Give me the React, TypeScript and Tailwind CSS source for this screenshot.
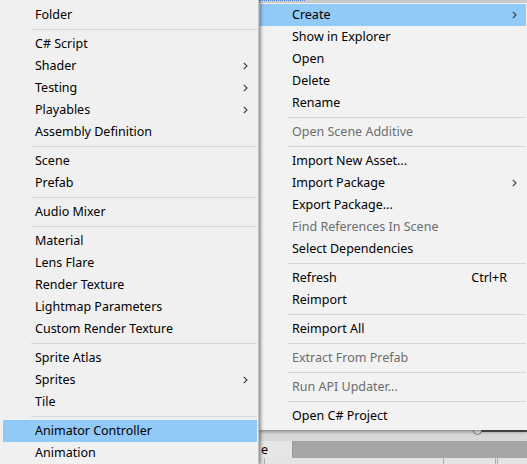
import React from 'react';

type Entry =
  | 'sep'
  | { label: string; sub?: boolean; disabled?: boolean; active?: boolean; shortcut?: string };

const createMenu: Entry[] = [
  { label: 'Folder' },
  'sep',
  { label: 'C# Script' },
  { label: 'Shader', sub: true },
  { label: 'Testing', sub: true },
  { label: 'Playables', sub: true },
  { label: 'Assembly Definition' },
  'sep',
  { label: 'Scene' },
  { label: 'Prefab' },
  'sep',
  { label: 'Audio Mixer' },
  'sep',
  { label: 'Material' },
  { label: 'Lens Flare' },
  { label: 'Render Texture' },
  { label: 'Lightmap Parameters' },
  { label: 'Custom Render Texture' },
  'sep',
  { label: 'Sprite Atlas' },
  { label: 'Sprites', sub: true },
  { label: 'Tile' },
  'sep',
  { label: 'Animator Controller', active: true },
  { label: 'Animation' },
];

const assetMenu: Entry[] = [
  { label: 'Create', sub: true, active: true },
  { label: 'Show in Explorer' },
  { label: 'Open' },
  { label: 'Delete' },
  { label: 'Rename' },
  'sep',
  { label: 'Open Scene Additive', disabled: true },
  'sep',
  { label: 'Import New Asset...' },
  { label: 'Import Package', sub: true },
  { label: 'Export Package...' },
  { label: 'Find References In Scene', disabled: true },
  { label: 'Select Dependencies' },
  'sep',
  { label: 'Refresh', shortcut: 'Ctrl+R' },
  { label: 'Reimport' },
  'sep',
  { label: 'Reimport All' },
  'sep',
  { label: 'Extract From Prefab', disabled: true },
  'sep',
  { label: 'Run API Updater...', disabled: true },
  'sep',
  { label: 'Open C# Project' },
];

function Chevron() {
  return (
    <svg width="5" height="8" viewBox="0 0 5 8" className="shrink-0">
      <path d="M0.8 0.8 L4 4 L0.8 7.2" fill="none" stroke="#3a3a3a" strokeWidth="1.1" />
    </svg>
  );
}

function MenuList({ entries }: { entries: Entry[] }) {
  return (
    <>
      {entries.map((e, i) => {
        if (e === 'sep') {
          return (
            <div key={i} className="py-[3px] pl-[28px]">
              <div className="h-px bg-[#d7d7d7]" />
            </div>
          );
        }
        return (
          <div
            key={i}
            className={`h-[22px] flex items-center pl-[32px] ${e.active ? 'bg-[#91c9f7]' : ''} ${
              e.disabled ? 'text-[#6d6d6d]' : 'text-black'
            }`}
          >
            <span className="flex-1 whitespace-nowrap">{e.label}</span>
            {e.shortcut && <span className="pr-[19px]">{e.shortcut}</span>}
            {e.sub && (
              <span className="pr-[9px]">
                <Chevron />
              </span>
            )}
          </div>
        );
      })}
    </>
  );
}

export default function App() {
  return (
    <div className="w-[527px] h-[464px] overflow-hidden flex bg-[#f0f0f0] text-[12.5px] leading-none font-['Noto_Sans',sans-serif]">
      {/* Create submenu */}
      <div className="relative z-20 w-[259px] shrink-0 h-full bg-[#f0f0f0] pt-[4px] pl-[3px] pr-px border-r border-[#c4c4c4] shadow-[2px_0_3px_rgba(0,0,0,0.4)]">
        <MenuList entries={createMenu} />
      </div>

      {/* Parent asset menu + editor behind */}
      <div className="flex-1 flex flex-col">
        <div className="h-[3px] bg-[#cbcbcb] flex">
          <div className="w-[46px] h-px border-t border-dotted border-[#4a86e8]" />
        </div>
        <div className="relative z-10 bg-[#f2f2f2] pt-px pb-[3px] pl-px pr-px shadow-[0_2px_3px_rgba(0,0,0,0.35)]">
          <MenuList entries={assetMenu} />
        </div>
        <div className="flex-1 flex flex-col">
          <div className="relative h-[11px] bg-[#d8d8d8]">
            <div className="absolute left-[222px] right-0 top-0 h-[2px] bg-[#555]" />
            <div className="absolute left-[214px] top-[-4px] w-[9px] h-[9px] rounded-full border border-[#777] bg-[#e6e6e6]" />
          </div>
          <div className="h-[17px] bg-[#a6a6a6] flex">
            <div className="w-[34px] h-[19px] bg-[#e6e6e6] border-r border-[#999] text-black pl-[2px] pt-[3px]">e</div>
          </div>
          <div className="flex-1 bg-[#e4e4e4] flex">
            <div className="w-[6px] border-r border-[#b0b0b0]" />
            <div className="w-[179px] border-r border-[#b0b0b0]" />
            <div className="w-[52px] border-r border-[#b0b0b0]" />
            <div className="w-[2px] border-r border-[#b0b0b0]" />
          </div>
        </div>
      </div>
    </div>
  );
}
